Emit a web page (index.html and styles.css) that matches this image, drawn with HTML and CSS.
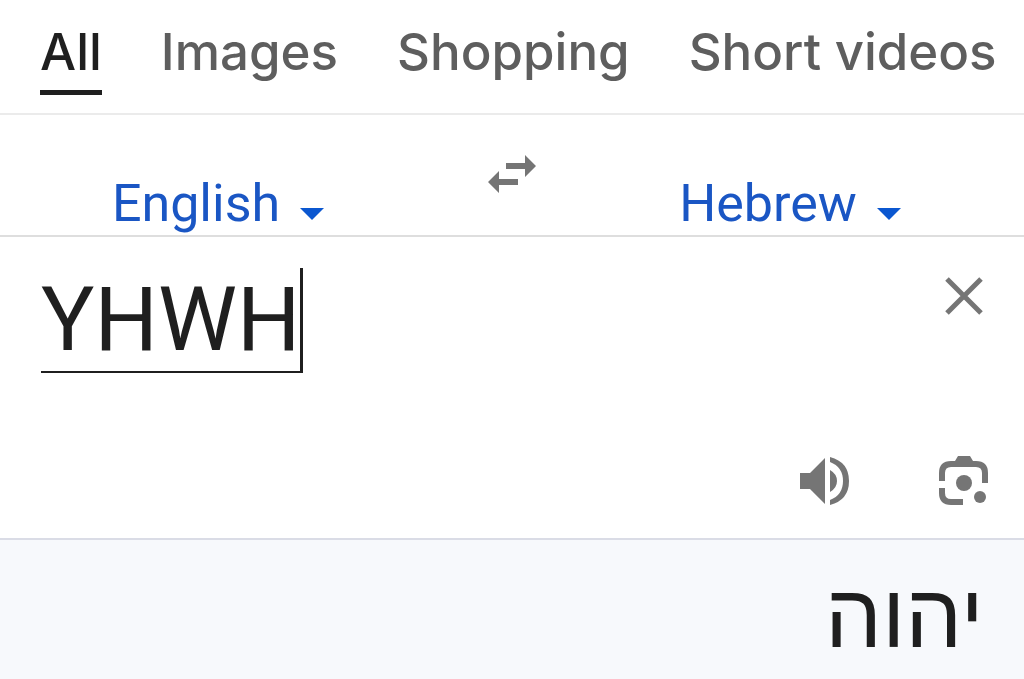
FILE: index.html
```html
<!DOCTYPE html>
<html lang="en">
<head>
  <meta charset="UTF-8">
  <meta name="viewport" content="width=device-width, initial-scale=1">
  <title>Translate</title>
  <link rel="stylesheet" href="styles.css">
</head>
<body>
  <nav class="tabs">
    <a class="tab active" href="#">All</a>
    <a class="tab" href="#">Images</a>
    <a class="tab" href="#">Shopping</a>
    <a class="tab" href="#">Short videos</a>
  </nav>

  <div class="languages">
    <div class="language">
      <select class="language-select" aria-label="Source language">
        <option>English</option>
      </select>
      <svg class="arrow" viewBox="0 0 24 12"><path d="M0 0h24L12 12z"/></svg>
    </div>
    <button class="swap" aria-label="Swap languages">
      <svg viewBox="0 0 48 38"><path d="M18 8h19V0l11 11-11 11v-8H18zM30 24v6H11v8L0 27l11-11v8z"/></svg>
    </button>
    <div class="language target">
      <select class="language-select" aria-label="Target language">
        <option>Hebrew</option>
      </select>
      <svg class="arrow" viewBox="0 0 24 12"><path d="M0 0h24L12 12z"/></svg>
    </div>
  </div>

  <main class="source">
    <div class="entry">
      <input class="source-text" type="text" value="YHWH" aria-label="Text to translate">
      <button class="icon-button" aria-label="Clear">
        <svg class="close" viewBox="0 0 38 38"><path d="M2 2l34 34M36 2L2 36"/></svg>
      </button>
    </div>
    <div class="actions">
      <button class="icon-button" aria-label="Listen">
        <svg class="action-icon" viewBox="0 0 50 50"><path d="M0 17h10L25 2v46L10 33H0zM30 14q7 4 7 11t-7 11zM30 1q19 5 19 24T30 49v-5q13-5 13-19T30 6z"/></svg>
      </button>
      <button class="icon-button" aria-label="Search with camera">
        <svg class="action-icon" viewBox="0 0 50 50">
          <path d="M0 25v-8Q0 5 12 5h4l3-5h12l3 5h3q12 0 12 12v10h-6V17q0-6-6-6H12q-6 0-6 6v8zM0 32h6v5q0 6 6 6h12v6H12Q0 49 0 37z"/>
          <circle cx="25" cy="27" r="8"/>
          <circle cx="41" cy="41" r="6"/>
        </svg>
      </button>
    </div>
  </main>

  <section class="result">
    <p class="result-text" lang="he" dir="rtl">יהוה</p>
  </section>
</body>
</html>
```
FILE: styles.css
```css
* {
  margin: 0;
  padding: 0;
  box-sizing: border-box;
}

body {
  min-height: 100vh;
  display: flex;
  flex-direction: column;
  background: #fff;
  color: #1f1f1f;
  font-family: Roboto, "Liberation Sans", sans-serif;
  overflow-x: hidden;
}

button {
  border: none;
  background: none;
  cursor: pointer;
}

svg {
  display: block;
  fill: #757575;
}

.tabs {
  display: flex;
  gap: 59px;
  padding: 14px 0 18px 40px;
  border-bottom: 2px solid #ebebeb;
}

.tab {
  padding-bottom: 1px;
  border-bottom: 5px solid transparent;
  color: #5e5e5e;
  font-family: Inter, sans-serif;
  font-size: 51px;
  font-weight: 500;
  line-height: 75px;
  text-decoration: none;
  white-space: nowrap;
}

.tab.active {
  color: #1f1f1f;
  border-color: #1f1f1f;
}

.languages {
  display: grid;
  grid-template-columns: 1fr auto 1fr;
  padding-top: 40px;
  border-bottom: 2px solid #dedede;
}

.language {
  display: flex;
  justify-content: center;
  align-items: center;
  gap: 20px;
  padding-top: 18px;
}

.language.target {
  padding-right: 32px;
}

.language-select {
  appearance: none;
  field-sizing: content;
  border: none;
  background: none;
  color: #1a56c4;
  font-family: inherit;
  font-size: 52px;
  line-height: 62px;
}

.arrow {
  width: 24px;
  margin-top: 20px;
  fill: #0b57d0;
}

.swap {
  align-self: start;
  padding: 0 52px;
}

.swap svg {
  width: 48px;
}

.source {
  padding: 31px 35px 32px 41px;
}

.entry {
  display: flex;
  justify-content: space-between;
  align-items: flex-start;
}

.source-text {
  field-sizing: content;
  height: 105px;
  border: solid #1f1f1f;
  border-width: 0 3px 2px 0;
  outline: none;
  color: inherit;
  font-family: inherit;
  font-size: 89px;
}

.close {
  width: 38px;
  margin: 9px 6px;
  fill: none;
  stroke: #757575;
  stroke-width: 5;
}

.actions {
  display: flex;
  justify-content: flex-end;
  gap: 89px;
  margin-top: 83px;
}

.action-icon {
  width: 50px;
}

.result {
  flex: 1;
  padding: 23px 40px 0;
  border-top: 2px solid #dadce6;
  background: #f7f9fc;
}

.result-text {
  font-family: "Liberation Sans", "DejaVu Sans", sans-serif;
  font-size: 90px;
  line-height: 106px;
}
```
